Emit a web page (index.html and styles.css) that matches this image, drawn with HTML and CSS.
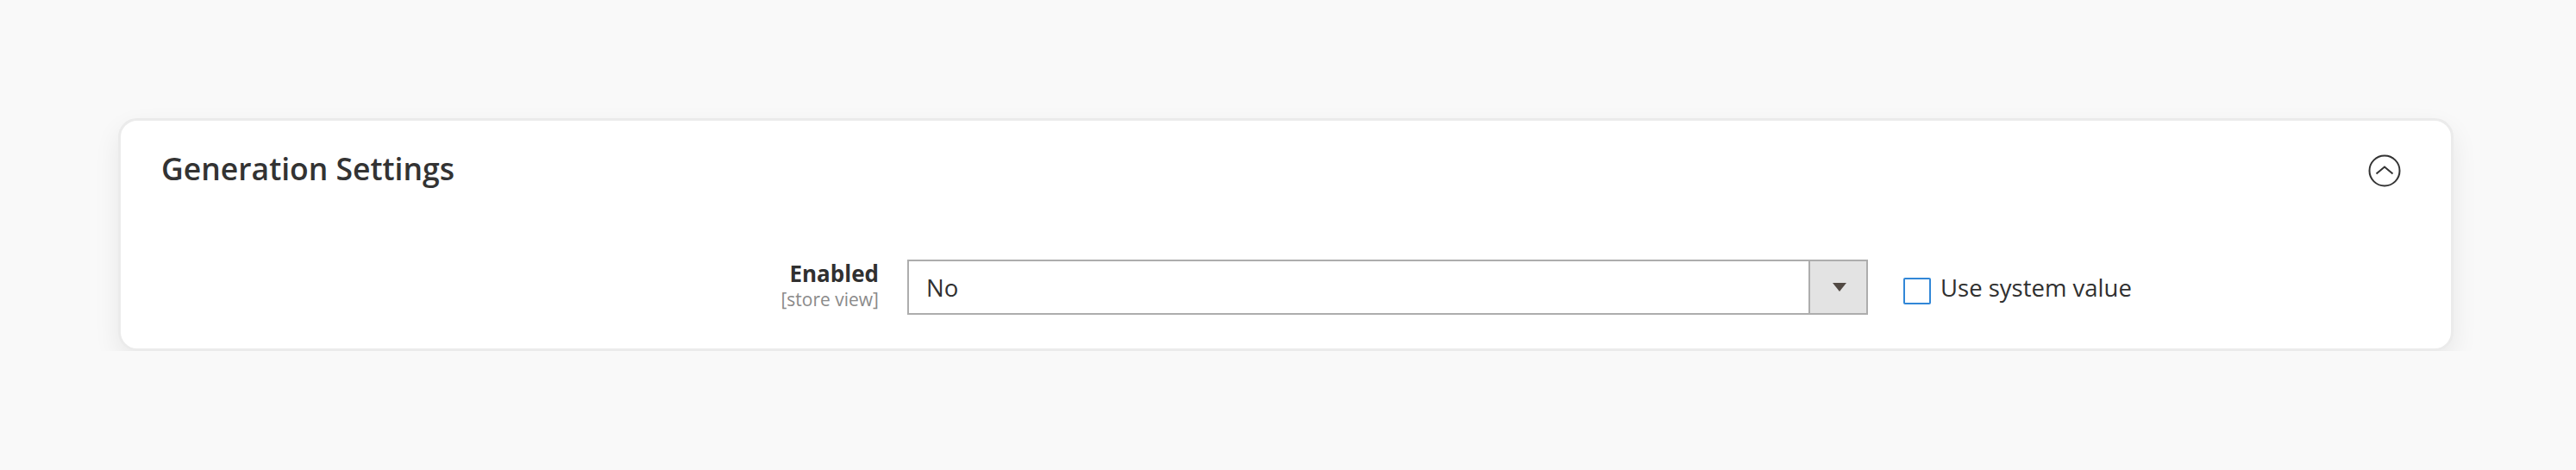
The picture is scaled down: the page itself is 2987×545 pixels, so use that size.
FILE: index.html
```html
<!DOCTYPE html>
<html lang="en">
<head>
<meta charset="utf-8">
<title>Generation Settings</title>
<link rel="stylesheet" href="styles.css">
</head>
<body>
<section class="card">
  <header class="card-header">
    <h2 class="card-title">Generation Settings</h2>
    <svg class="toggle" width="38" height="38" viewBox="0 0 38 38" aria-hidden="true">
      <circle cx="19" cy="19" r="17.5" fill="none" stroke="#333" stroke-width="2"/>
      <polyline points="9.5,22.5 19,14.5 28.5,22.5" fill="none" stroke="#333" stroke-width="2"/>
    </svg>
  </header>
  <div class="field-row">
    <div class="field-label">
      <span class="label-text">Enabled</span>
      <span class="scope">[store view]</span>
    </div>
    <div class="select">
      <span class="select-value">No</span>
      <span class="select-button"><span class="arrow"></span></span>
    </div>
    <label class="inherit">
      <span class="checkbox"></span>
      <span class="inherit-text">Use system value</span>
    </label>
  </div>
</section>
</body>
</html>
```

FILE: styles.css
```css
html, body {
  margin: 0;
  padding: 0;
}
body {
  background: #f9f9f9;
  font-family: "Open Sans", "Liberation Sans", sans-serif;
  color: #303030;
  padding: 137px 142px 0 137px;
}
.card {
  background: #fff;
  border: 3px solid #ebebeb;
  border-radius: 22px;
  box-shadow: 0 12px 30px rgba(0, 0, 0, 0.075);
  padding: 0 0 39px 0;
}
.card-header {
  display: flex;
  justify-content: space-between;
  align-items: flex-start;
  padding: 32px 58px 0 47px;
}
.card-title {
  margin: 0;
  font-size: 35.5px;
  font-weight: 600;
  line-height: 46px;
  color: #333;
}
.toggle {
  display: block;
  margin-top: 7px;
}
.field-row {
  display: flex;
  align-items: flex-start;
  margin-top: 82px;
}
.field-label {
  width: 879px;
  flex: none;
  text-align: right;
  display: flex;
  flex-direction: column;
  align-items: flex-end;
}
.label-text {
  font-size: 26px;
  font-weight: 700;
  line-height: 35px;
  color: #303030;
}
.scope {
  font-size: 21px;
  line-height: 24px;
  color: #8a8a8a;
}
.select {
  margin-left: 33px;
  margin-top: 1px;
  width: 1114px;
  height: 64px;
  box-sizing: border-box;
  border: 2px solid #adadad;
  display: flex;
  align-items: stretch;
  flex: none;
}
.select-value {
  flex: 1;
  display: flex;
  align-items: center;
  padding-left: 20px;
  font-size: 27.5px;
  line-height: 35px;
  color: #303030;
}
.select-button {
  width: 67px;
  box-sizing: border-box;
  border-left: 2px solid #adadad;
  background: #e3e3e3;
  display: flex;
  align-items: center;
  justify-content: center;
}
.arrow {
  width: 0;
  height: 0;
  border-left: 8px solid transparent;
  border-right: 8px solid transparent;
  border-top: 10px solid #514943;
  margin-left: 2px;
}
.inherit {
  margin-left: 41px;
  margin-top: 22px;
  display: flex;
  align-items: flex-start;
}
.checkbox {
  width: 32px;
  height: 31px;
  box-sizing: border-box;
  border: 2px solid #3187d7;
  border-radius: 2px;
  background: #fff;
  flex: none;
}
.inherit-text {
  margin-left: 11px;
  margin-top: -4px;
  font-size: 27.5px;
  line-height: 32px;
  color: #303030;
}
```
